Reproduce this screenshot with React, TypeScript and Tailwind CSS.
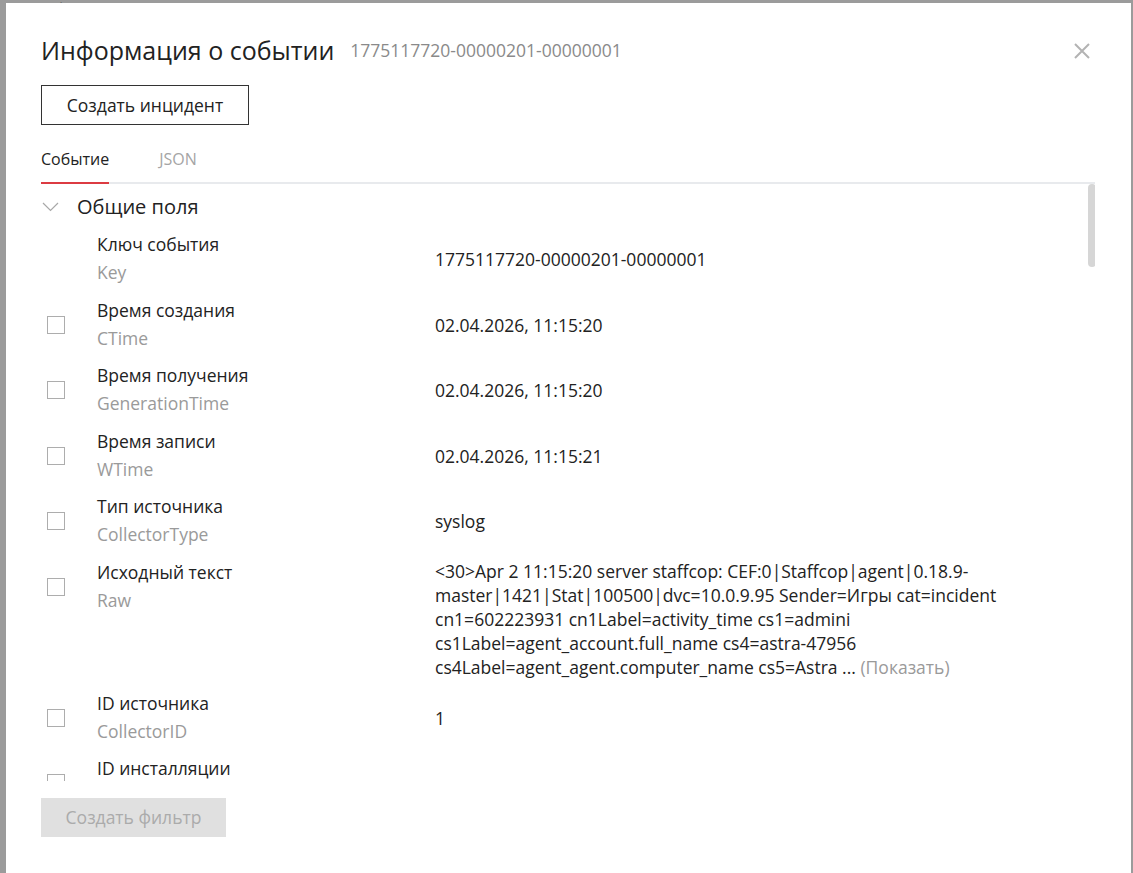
import React from "react";

const rows: { label: string; sub: string; value: React.ReactNode; check: boolean; raw?: boolean }[] = [
  { label: "Ключ события", sub: "Key", value: "1775117720-00000201-00000001", check: false },
  { label: "Время создания", sub: "CTime", value: "02.04.2026, 11:15:20", check: true },
  { label: "Время получения", sub: "GenerationTime", value: "02.04.2026, 11:15:20", check: true },
  { label: "Время записи", sub: "WTime", value: "02.04.2026, 11:15:21", check: true },
  { label: "Тип источника", sub: "CollectorType", value: "syslog", check: true },
  {
    label: "Исходный текст",
    sub: "Raw",
    raw: true,
    value: (
      <>
        &lt;30&gt;Apr 2 11:15:20 server staffcop: CEF:0|Staffcop|agent|0.18.9-master|1421|Stat|100500|dvc=10.0.9.95 Sender=Игры cat=incident cn1=602223931 cn1Label=activity_time cs1=admini cs1Label=agent_account.full_name cs4=astra-47956 cs4Label=agent_agent.computer_name cs5=Astra ...{" "}
        <span className="text-[#9a9a9a]">(Показать)</span>
      </>
    ),
    check: true,
  },
  { label: "ID источника", sub: "CollectorID", value: "1", check: true },
  { label: "ID инсталляции", sub: "InstallationID", value: "", check: true },
];

export default function App() {
  return (
    <div
      className="relative w-[1133px] h-[873px] overflow-hidden bg-[#9b9b9b]"
      style={{ fontFamily: '"Open Sans", "Noto Sans", sans-serif' }}
    >
      {/* page behind */}
      <div className="flex items-center h-[20px] -mt-[14px] text-[17px] text-[#444]">
        <span className="ml-[55px]">Выберите фильтр</span>
        <span className="ml-[700px]">Последние сутки (01.04.2026 12:59</span>
      </div>

      {/* modal */}
      <div className="absolute left-[6px] top-[3px] w-[1125px] h-[900px] bg-white flex flex-col pl-[35px] pr-[36px] text-[#222]">
        <div className="flex items-center h-[48px] mt-[23px]">
          <h1 className="text-[25px] leading-[32px] text-[#222]">Информация о событии</h1>
          <span className="ml-[16px] text-[17.5px] text-[#8a8a8a] mt-[1px]">1775117720-00000201-00000001</span>
          <div className="ml-auto mr-[4px] mt-[1px]">
            <svg width="18" height="18" viewBox="0 0 18 18" stroke="#b3b3b3" strokeWidth="2" fill="none">
              <path d="M2 2 L16 16 M16 2 L2 16" />
            </svg>
          </div>
        </div>

        <div className="mt-[11px]">
          <button className="h-[40px] w-[208px] border border-[#333] text-[17.5px] text-[#222]">Создать инцидент</button>
        </div>

        <div className="flex gap-[50px] mt-[23px] border-b-2 border-[#e8eaed] h-[36px]">
          <div className="text-[16px] text-[#222] border-b-2 border-[#dc3b42] -mb-[2px] leading-[22px] pb-[12px]">Событие</div>
          <div className="text-[16px] text-[#a5a5a5] leading-[22px]">JSON</div>
        </div>

        <div className="relative h-[597px] overflow-hidden">
          <div className="absolute right-[-1px] top-0 w-[8px] h-[83px] rounded-[4px] bg-[#d6d6d6]" />
          <div className="flex items-center h-[28px] mt-[9px]">
            <svg width="17" height="10" viewBox="0 0 17 10" fill="none" stroke="#a8a8a8" strokeWidth="1.2" className="ml-[1px]">
              <path d="M1 1 L8.5 8.5 L16 1" />
            </svg>
            <span className="ml-[18px] text-[20px] text-[#222]">Общие поля</span>
          </div>
          <div className="flex flex-col gap-[9.6px] mt-[9px]">
            {rows.map((r, i) => (
              <div key={i} className="flex items-start">
                <div className="w-[56px] h-[56px] flex items-center">
                  {r.check && <div className="ml-[6px] mt-[2px] w-[18px] h-[18px] border border-[#adadad]" />}
                </div>
                <div className="w-[338px] text-[17.5px] leading-[28px]">
                  <div className="text-[#222]">{r.label}</div>
                  <div className="text-[#9a9a9a]">{r.sub}</div>
                </div>
                <div className="w-[570px] min-h-[56px] pt-[2px] flex items-center text-[17.5px] leading-[24px] text-[#222] break-words">
                  <div className={r.raw ? "-mt-[1px]" : ""}>{r.value}</div>
                </div>
              </div>
            ))}
          </div>
        </div>

        <div className="mt-[17px]">
          <button className="h-[39px] w-[185px] bg-[#e0e0e0] text-[17.5px] text-[#ababab]">Создать фильтр</button>
        </div>
      </div>
    </div>
  );
}
